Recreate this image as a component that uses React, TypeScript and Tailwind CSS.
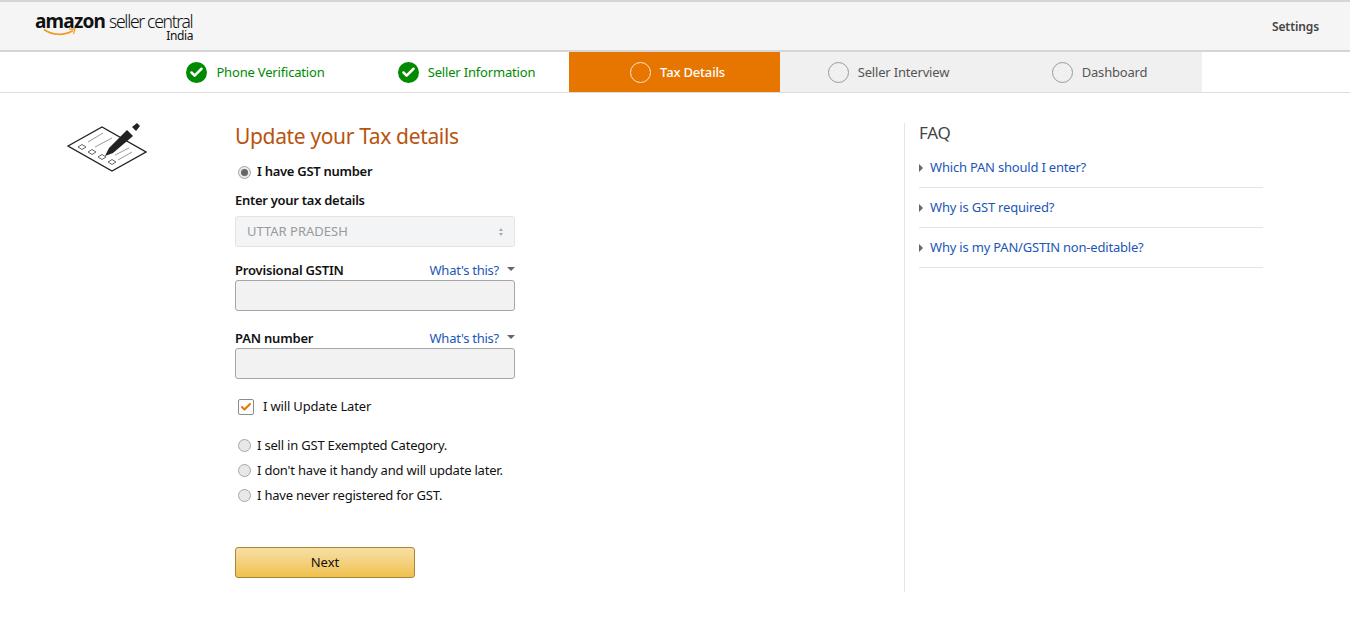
import { Check } from "lucide-react";

const font = "font-['Noto_Sans','Liberation_Sans',sans-serif]";

const steps = [
  { label: "Phone Verification", state: "done" },
  { label: "Seller Information", state: "done" },
  { label: "Tax Details", state: "active" },
  { label: "Seller Interview", state: "todo" },
  { label: "Dashboard", state: "todo" },
];

const faqs = ["Which PAN should I enter?", "Why is GST required?", "Why is my PAN/GSTIN non-editable?"];

const Logo = () => (
  <div className="relative ml-[35px] h-[42px] w-[160px] text-[#111]">
    <div className="flex items-baseline whitespace-nowrap pt-[9px] leading-[15px]">
      <span className="text-[19px] font-bold tracking-[-0.8px]">amazon</span>
      <span className="ml-[4px] text-[17.5px] font-light tracking-[-1.3px]">seller central</span>
    </div>
    <svg className="absolute left-[8px] top-[23px]" width="34" height="10" viewBox="0 0 34 10">
      <path d="M1 1.5C9 7.5 21 8 30 2.5" fill="none" stroke="#f39a1e" strokeWidth="1.6" />
      <path d="M26 1.2L32 0.8L30.5 6" fill="none" stroke="#f39a1e" strokeWidth="1.2" />
    </svg>
    <div className="absolute right-[2px] top-[24px] text-[12px] leading-[14px] tracking-[-0.4px]">India</div>
  </div>
);

const StepIcon = ({ state }: { state: string }) => {
  if (state === "done") {
    return (
      <span className="flex h-[21px] w-[21px] items-center justify-center rounded-full bg-[#008a00]">
        <Check size={15} strokeWidth={4} className="text-white" />
      </span>
    );
  }
  if (state === "active") return <span className="h-[21px] w-[21px] rounded-full border border-[#f8e6d2]" />;
  return <span className="h-[21px] w-[21px] rounded-full border border-[#9a9a9a]" />;
};

const Step = ({ label, state }: { label: string; state: string }) => {
  const bg = state === "active" ? "bg-[#e77600]" : state === "todo" ? "bg-[#f0f0f0]" : "bg-white";
  const color = state === "active" ? "text-white font-medium" : state === "todo" ? "text-[#555]" : "text-[#008a00]";
  return (
    <div className={`flex h-[40px] w-[211px] items-center justify-center gap-[9px] pl-[6px] text-[13px] tracking-[-0.18px] ${bg} ${color}`}>
      <StepIcon state={state} />
      <span className="pt-[1px]">{label}</span>
    </div>
  );
};

const TaxIcon = () => (
  <svg width="80" height="50" viewBox="0 0 80 50" fill="none" stroke="#222">
    <path d="M1 23L35 4L79 29L45 48Z" strokeWidth="1.4" fill="#fff" />
    <path d="M21 19L36 10M28 24L45 15M48 32L62 25M51 37L65 29" stroke="#999" strokeWidth="1" />
    <path d="M11 24L15 21.5L19 24L15 26.5ZM21 29L25 26.5L29 29L25 31.5ZM31 34L35 31.5L39 34L35 36.5ZM41 39L45 36.5L49 39L45 41.5Z" stroke="#666" strokeWidth="1" />
    <path d="M38 33L42 25L60 7L66 13L46 30Z" fill="#222" stroke="none" />
    <path d="M65 4L70 0L73 3L69 8Z" fill="#222" stroke="none" />
  </svg>
);

const Radio = ({ checked }: { checked?: boolean }) => (
  <span className="flex h-[13px] w-[13px] shrink-0 items-center justify-center rounded-full border border-[#a6a6a6] bg-[#e8e8e8]">
    {checked && <span className="h-[7px] w-[7px] rounded-full bg-[#666]" />}
  </span>
);

const Field = ({ label }: { label: string }) => (
  <div>
    <div className="flex h-[17px] items-center justify-between text-[13px]">
      <span className="font-semibold tracking-[-0.2px] text-[#111]">{label}</span>
      <span className="flex items-center tracking-[-0.25px] text-[#1d56b8]">
        What's this?
        <span className="mb-[4px] ml-[8px] h-0 w-0 border-x-4 border-t-4 border-x-transparent border-t-[#666]" />
      </span>
    </div>
    <div className="mt-[1px] h-[31px] rounded-[3px] border border-[#a6a6a6] bg-[#f2f2f2]" />
  </div>
);

const RadioRow = ({ label }: { label: string }) => (
  <div className="flex h-[25px] items-center gap-[6px] pl-[3px] text-[13px] tracking-[-0.2px] text-[#111]">
    <Radio />
    <span>{label}</span>
  </div>
);

export default function App() {
  return (
    <div className={`h-[636px] w-[1350px] overflow-hidden bg-white ${font}`}>
      <header className="flex h-[52px] items-center justify-between border-y-2 border-[#d5d5d5] bg-[#f5f5f5] pr-[31px]">
        <Logo />
        <span className="pt-[2px] text-[12px] font-semibold tracking-[-0.1px] text-[#444]">Settings</span>
      </header>
      <nav className="flex h-[41px] border-b border-[#ddd] pl-[147px]">
        {steps.map((s) => (
          <Step key={s.label} label={s.label} state={s.state} />
        ))}
      </nav>

      <main className="flex">
        <div className="w-[235px] shrink-0 pl-[67px] pt-[30px]">
          <TaxIcon />
        </div>
        <section className="w-[280px] shrink-0 pt-[29px]">
          <h1 className="text-[21px] leading-[29px] tracking-[-0.35px] text-[#b8530e]">Update your Tax details</h1>
          <div className="mt-[12px] flex h-[18px] items-center gap-[6px] pl-[3px] text-[13px] font-semibold tracking-[-0.28px] text-[#111]">
            <Radio checked />
            <span>I have GST number</span>
          </div>
          <div className="mt-[11px] h-[17px] text-[13px] font-semibold leading-[17px] tracking-[-0.28px] text-[#111]">Enter your tax details</div>
          <div className="mt-[7px] flex h-[31px] items-center justify-between rounded-[3px] border border-[#e2e4e6] bg-[#f3f4f6] pl-[11px] pr-[11px] text-[13px] text-[#9a9a9a]">
            <span>UTTAR PRADESH</span>
            <span className="flex flex-col gap-[2px]">
              <span className="h-0 w-0 border-x-[2.5px] border-b-[3px] border-x-transparent border-b-[#aaa]" />
              <span className="h-0 w-0 border-x-[2.5px] border-t-[3px] border-x-transparent border-t-[#aaa]" />
            </span>
          </div>
          <div className="mt-[15px]">
            <Field label="Provisional GSTIN" />
          </div>
          <div className="mt-[19px]">
            <Field label="PAN number" />
          </div>
          <div className="mt-[19px] flex h-[17px] items-center gap-[9px] pl-[3px] text-[13px] tracking-[-0.16px] text-[#111]">
            <span className="flex h-[16px] w-[16px] items-center justify-center rounded-[2px] border border-[#8c8c8c] bg-white">
              <Check size={12} strokeWidth={4} className="text-[#e77600]" />
            </span>
            <span>I will Update Later</span>
          </div>
          <div className="mt-[18px]">
            <RadioRow label="I sell in GST Exempted Category." />
            <RadioRow label="I don't have it handy and will update later." />
            <RadioRow label="I have never registered for GST." />
          </div>
          <button className="mt-[39px] h-[31px] w-[180px] rounded-[3px] border border-[#a88734] bg-gradient-to-b from-[#f7dfa5] to-[#f0c14b] text-[13px] text-[#111]">
            Next
          </button>
        </section>
        <aside className="ml-[389px] mt-[30px] h-[469px] w-[359px] border-l border-[#e4e4e4] pl-[14px]">
          <h2 className="text-[17px] leading-[20px] tracking-[-0.3px] text-[#444]">FAQ</h2>
          <div className="mt-[5px]">
            {faqs.map((q) => (
              <div key={q} className="flex h-[40px] items-center gap-[7px] border-b border-[#e4e4e4] text-[13px] tracking-[-0.2px] text-[#1d56b8]">
                <span className="h-0 w-0 border-y-4 border-l-4 border-y-transparent border-l-[#666]" />
                <span>{q}</span>
              </div>
            ))}
          </div>
        </aside>
      </main>
    </div>
  );
}
